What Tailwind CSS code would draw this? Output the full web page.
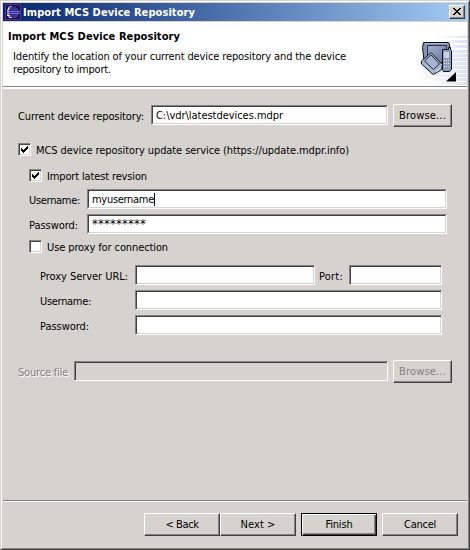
<!DOCTYPE html>
<html lang="en">
<head>
<meta charset="utf-8">
<title>Import MCS Device Repository</title>
<script src="https://cdn.jsdelivr.net/npm/@tailwindcss/browser@4"></script>
</head>
<body class="w-[470px] h-[550px] overflow-hidden bg-[#d6d3ce] text-black text-[11px] leading-[13px] whitespace-nowrap font-stretch-semi-condensed font-['DejaVu_Sans_Condensed','DejaVu_Sans',sans-serif]">
<div class="w-[470px] h-[550px] border border-l-[#d6d3ce] border-t-[#d6d3ce] border-r-[#424142] border-b-[#424142]">
<div class="h-full border border-l-white border-t-white border-r-[#848284] border-b-[#848284] pt-px pl-px flex flex-col">

  <header class="h-[18px] w-[464px] shrink-0 flex items-center bg-linear-to-r from-[#08246b] to-[#a5cbf7] text-white pl-[2px] pr-[2px]">
    <svg class="w-4 h-4 shrink-0" viewBox="0 0 16 16" shape-rendering="crispEdges">
      <rect width="16" height="16" fill="#4a349c"/><rect x="1" y="1" width="14" height="14" fill="#21104a"/>
      <path d="M5 3h6v1h2v2h1v5h-1v2h-2v1H6v-1H4V4h1z" fill="#42308c"/>
      <path d="M4 2h3v1H5v2H4v6h1v2h2v1H4v-1H3v-2H2V5h1V3h1z" fill="#9c8ace"/>
      <path d="M3 4h1v2H3zM2 11h3v1H2zM4 13h2v1H4z" fill="#f7e7ff"/>
      <path d="M4 7h11v1H4zM4 9h11v1H4z" fill="#6271c7"/><path d="M5 8h9v1H5z" fill="#313494"/>
    </svg>
    <span data-w="172" class="ml-[2px] font-bold">Import MCS Device Repository</span>
    <button class="ml-auto w-4 h-[14px] shrink-0 bg-[#d6d3ce] border border-l-white border-t-white border-r-[#424142] border-b-[#424142] shadow-[inset_-1px_-1px_#848284] flex" aria-label="Close">
      <svg class="w-[14px] h-3" viewBox="0 0 14 12" shape-rendering="crispEdges"><path d="M3 2h2v1h1v1h2V3h1V2h2v1h-1v1H9v1H8v1h1v1h1v1h1v1H9V8H8V7H6v1H5v1H3V8h1V7h1V6h1V5H5V4H4V3H3z" fill="#000"/></svg>
    </button>
  </header>
  <div class="h-px shrink-0"></div>

  <section class="h-[67px] w-[464px] shrink-0 bg-white border-b-2 border-b-white shadow-[inset_0_-1px_#848284] flex justify-between">
    <div class="pl-[5px] pt-[8px]">
      <div><span data-w="172" class="font-bold">Import MCS Device Repository</span></div>
      <div class="pl-[5px] pt-[7px]">
        <div><span data-w="333">Identify the location of your current device repository and the device</span></div>
        <div><span data-w="98">repository to import.</span></div>
      </div>
    </div>
    <svg class="w-[60px] h-[64px] shrink-0" viewBox="406 22 60 64">
      <defs>
        <linearGradient id="haze"><stop offset="0" stop-color="#d6dff7" stop-opacity="0"/><stop offset="1" stop-color="#c6d6f7"/></linearGradient>
        <radialGradient id="glow"><stop offset="0" stop-color="#c6d3f7"/><stop offset="1" stop-color="#fff" stop-opacity="0"/></radialGradient>
        <linearGradient id="screen" x1="0" y1="0" x2="1" y2="1"><stop offset="0" stop-color="#a5b2ce"/><stop offset="1" stop-color="#64789c"/></linearGradient>
      </defs>
      <circle cx="438" cy="64" r="27" fill="url(#glow)"/>
      <path d="M432 36h35v49h-35z" fill="url(#haze)" opacity=".75"/>
      <g fill="#fff"><rect x="430" y="38" width="37" height="2"/><rect x="430" y="43" width="37" height="2"/><rect x="430" y="48" width="37" height="2"/><rect x="430" y="53" width="37" height="1"/><rect x="430" y="57" width="37" height="1"/><rect x="430" y="61" width="37" height="1"/><rect x="430" y="65" width="37" height="1"/><rect x="430" y="69" width="37" height="1"/><rect x="430" y="73" width="37" height="1"/><rect x="430" y="77" width="37" height="1"/><rect x="430" y="81" width="37" height="1"/></g>
      <path d="M422.500 42.500h25l1 2v21h-25l-2-18z" fill="#8494b5" stroke="#101010"/>
      <path d="M426.500 45.500h19v17h-19z" fill="url(#screen)" stroke="#293042"/>
      <path d="M424 43.500h22" stroke="#a5b0cb"/>
      <path d="M441.500 49.500h6v-2h2v2l1 1v19l-2 2h-6l-1-2z" fill="#8c9ab5" stroke="#101010"/>
      <path d="M443 52h5v6h-5z" fill="#c6d3e7"/>
      <path d="M443 60.500h5M443 63.500h5M443 66.500h5" stroke="#dee7f7" stroke-dasharray="1 1"/>
      <path d="M430 52.500l11.500 12-1 5-7 4.500h-2l-11-10v-3z" fill="#a9b6ce" stroke="#101010"/>
      <path d="M430 55l8.500 9-6 5.500-9-8.500z" fill="#a5b5d3" stroke="#202838"/>
      <path d="M435 72l5-4" stroke="#dee7f7"/>
      <path d="M455 72v9.500h-10z" fill="#000"/>
    </svg>
  </section>

  <main class="h-[411px] shrink-0 flex flex-col pl-[15px]">
    <div class="pt-[15px] flex">
      <label class="mt-[6px] w-[133px]"><span data-w="126">Current device repository:</span></label>
      <div class="mt-px w-[237px] h-5 bg-white border border-t-[#848284] border-l-[#848284] border-r-white border-b-white"><div class="h-full border border-t-[#424142] border-l-[#424142] border-r-[#d6d3ce] border-b-[#d6d3ce] pl-[3px] pt-[2px]"><span data-w="127">C:\vdr\latestdevices.mdpr</span></div></div>
      <button class="ml-[5px] w-[59px] h-[23px] pb-px border border-l-white border-t-white border-r-[#424142] border-b-[#424142] shadow-[inset_-1px_-1px_#848284]"><span data-w="47">Browse...</span></button>
    </div>

    <div class="mt-4 flex h-[13px]">
      <div class="w-[13px] h-[13px] bg-white border border-t-[#848284] border-l-[#848284] border-r-white border-b-white shadow-[inset_1px_1px_#424142,inset_-1px_-1px_#d6d3ce]"><svg class="w-[11px] h-[11px]" viewBox="0 0 11 11" shape-rendering="crispEdges"><path d="M2 4h1v1h1v1h1V5h1V4h1V3h1V2h1v3H8v1H7v1H6v1H5v1H4V8H3V7H2z"/></svg></div>
      <span class="ml-[5px] mt-px"><span data-w="313">MCS device repository update service (https://update.mdpr.info)</span></span>
    </div>

    <div class="pl-[11px]">
      <div class="mt-[13px] flex h-[13px]">
        <div class="w-[13px] h-[13px] bg-white border border-t-[#848284] border-l-[#848284] border-r-white border-b-white shadow-[inset_1px_1px_#424142,inset_-1px_-1px_#d6d3ce]"><svg class="w-[11px] h-[11px]" viewBox="0 0 11 11" shape-rendering="crispEdges"><path d="M2 4h1v1h1v1h1V5h1V4h1V3h1V2h1v3H8v1H7v1H6v1H5v1H4V8H3V7H2z"/></svg></div>
        <span class="ml-[5px] mt-px"><span data-w="100">Import latest revsion</span></span>
      </div>
      <div class="mt-[7px] flex">
        <label class="mt-[5px] w-[58px]"><span data-w="51">Username:</span></label>
        <div class="w-[360px] h-5 bg-white border border-t-[#848284] border-l-[#848284] border-r-white border-b-white"><div class="h-full border border-t-[#424142] border-l-[#424142] border-r-[#d6d3ce] border-b-[#d6d3ce] pl-[3px] pt-[2px] flex"><span data-w="62">myusername</span><i class="w-px h-[13px] bg-black"></i></div></div>
      </div>
      <div class="mt-[5px] flex">
        <label class="mt-[5px] w-[58px]"><span data-w="49">Password:</span></label>
        <div class="w-[360px] h-5 bg-white border border-t-[#848284] border-l-[#848284] border-r-white border-b-white"><div class="h-full border border-t-[#424142] border-l-[#424142] border-r-[#d6d3ce] border-b-[#d6d3ce] pl-[3px] pt-px text-[13px]"><span data-w="54">*********</span></div></div>
      </div>
      <div class="mt-[6px] flex h-[13px]">
        <div class="w-[13px] h-[13px] bg-white border border-t-[#848284] border-l-[#848284] border-r-white border-b-white shadow-[inset_1px_1px_#424142,inset_-1px_-1px_#d6d3ce]"></div>
        <span class="ml-[5px] mt-px"><span data-w="121">Use proxy for connection</span></span>
      </div>

      <div class="pl-[11px]">
        <div class="mt-3 flex">
          <label class="mt-[5px] w-[95px]"><span data-w="88">Proxy Server URL:</span></label>
          <div class="w-[180px] h-5 bg-white border border-t-[#848284] border-l-[#848284] border-r-white border-b-white shadow-[inset_1px_1px_#424142,inset_-1px_-1px_#d6d3ce]"></div>
          <label class="mt-[5px] ml-1 w-[30px]"><span data-w="24">Port:</span></label>
          <div class="w-[93px] h-5 bg-white border border-t-[#848284] border-l-[#848284] border-r-white border-b-white shadow-[inset_1px_1px_#424142,inset_-1px_-1px_#d6d3ce]"></div>
        </div>
        <div class="mt-[5px] flex">
          <label class="mt-[5px] w-[95px]"><span data-w="51">Username:</span></label>
          <div class="w-[307px] h-5 bg-white border border-t-[#848284] border-l-[#848284] border-r-white border-b-white shadow-[inset_1px_1px_#424142,inset_-1px_-1px_#d6d3ce]"></div>
        </div>
        <div class="mt-[5px] flex">
          <label class="mt-[5px] w-[95px]"><span data-w="49">Password:</span></label>
          <div class="w-[307px] h-5 bg-white border border-t-[#848284] border-l-[#848284] border-r-white border-b-white shadow-[inset_1px_1px_#424142,inset_-1px_-1px_#d6d3ce]"></div>
        </div>
      </div>
    </div>

    <div class="mt-[25px] flex text-[#848284] [text-shadow:1px_1px_#fff]">
      <label class="mt-[6px] w-[56px]"><span data-w="50">Source file</span></label>
      <div class="mt-px w-[314px] h-5 border border-t-[#848284] border-l-[#848284] border-r-white border-b-white shadow-[inset_1px_1px_#424142,inset_-1px_-1px_#d6d3ce]"></div>
      <button disabled class="ml-[5px] w-[59px] h-[23px] pb-px border border-l-white border-t-white border-r-[#424142] border-b-[#424142] shadow-[inset_-1px_-1px_#848284]"><span data-w="47">Browse...</span></button>
    </div>
  </main>

  <footer class="w-[464px] border-t border-t-[#848284] shadow-[inset_0_1px_#fff] pt-3 pl-[141px] flex">
    <button class="w-[76px] h-[23px] border border-l-white border-t-white border-r-[#424142] border-b-[#424142] shadow-[inset_-1px_-1px_#848284]"><span data-w="33">&lt; Back</span></button>
    <button class="w-[76px] h-[23px] border border-l-white border-t-white border-r-[#424142] border-b-[#424142] shadow-[inset_-1px_-1px_#848284]"><span data-w="35">Next &gt;</span></button>
    <button class="ml-[5px] w-[76px] h-[23px] border border-black shadow-[inset_1px_1px_#fff,inset_-1px_-1px_#424142,inset_-2px_-2px_#848284]"><span data-w="27">Finish</span></button>
    <button class="ml-[5px] w-[76px] h-[23px] border border-l-white border-t-white border-r-[#424142] border-b-[#424142] shadow-[inset_-1px_-1px_#848284]"><span data-w="32">Cancel</span></button>
  </footer>
</div>
</div>
<script>
// Track each label so that it fills its set width.
function fitLabels() {
  document.querySelectorAll('span[data-w]').forEach(function (el) {
    el.style.display = 'inline-block';
    el.style.letterSpacing = '0px';
    var range = document.createRange();
    range.selectNodeContents(el);
    var w = range.getBoundingClientRect().width;
    el.style.letterSpacing = ((+el.dataset.w - w) / el.textContent.length) + 'px';
  });
}
fitLabels();
window.addEventListener('load', fitLabels);
document.fonts.ready.then(fitLabels);
</script>
</body>
</html>
